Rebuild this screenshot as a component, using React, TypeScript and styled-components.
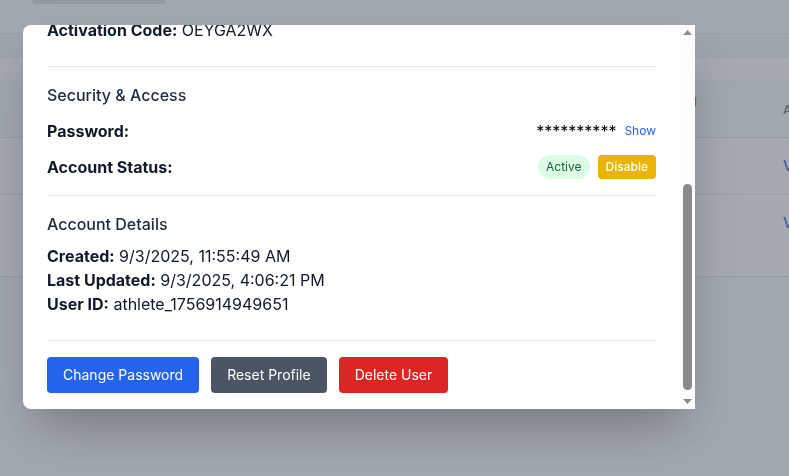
import React, { useLayoutEffect, useRef } from "react";
import styled, { createGlobalStyle } from "styled-components";

const GlobalStyle = createGlobalStyle`
  html, body { margin: 0; padding: 0; }
  body {
    background: #f9fafb;
    font-family: Inter, "Noto Sans", sans-serif;
    color: #111827;
    overflow: hidden;
  }
  * { box-sizing: border-box; }
`;

/* ---------- background page ---------- */
const Page = styled.div`
  width: 789px;
  height: 476px;
  background: #f9fafb;
  overflow: hidden;
`;
const TopBar = styled.div`
  height: 34px;
  padding-left: 32px;
  border-bottom: 1px solid #e5e7eb;
`;
const SearchStub = styled.div`
  width: 134px;
  height: 4px;
  background: #d9dce1;
  border-radius: 0 0 6px 6px;
`;
const Band = styled.div<{ $bg: string; $h: number }>`
  height: ${(p) => p.$h}px;
  background: ${(p) => p.$bg};
  border-bottom: 1px solid #eceef1;
`;
const TableGrid = styled.div`
  display: grid;
  grid-template-columns: 595px 164px 200px;
  width: 959px;
  background: #fff;
  border-bottom: 1px solid #e5e7eb;
`;
const HeadCell = styled.div`
  height: 56px;
  padding: 0 24px;
  background: #f9fafb;
  border-bottom: 1px solid #e5e7eb;
  display: flex;
  align-items: center;
  font-size: 12px;
  line-height: 16px;
  font-weight: 500;
  letter-spacing: 0.05em;
  text-transform: uppercase;
  color: #6b7280;
`;
const HeadText = styled.span<{ $w?: number }>`
  display: block;
  max-width: ${(p) => (p.$w ? `${p.$w}px` : "none")};
`;
const BodyCell = styled.div<{ $h: number; $last?: boolean }>`
  height: ${(p) => p.$h}px;
  padding: 16px 24px 0;
  font-size: 14px;
  line-height: 24px;
  color: #111827;
  border-bottom: ${(p) => (p.$last ? "none" : "1px solid #e5e7eb")};
`;
const RowLink = styled.span`
  color: #2563eb;
  font-weight: 500;
`;

/* ---------- overlay & modal ---------- */
const Overlay = styled.div`
  position: fixed;
  inset: 0;
  background: rgba(75, 85, 99, 0.5);
  padding: 25px 0 0 23px;
  display: flex;
  align-items: flex-start;
`;
const Modal = styled.div`
  width: 672px;
  height: 384px;
  background: #fff;
  border-radius: 8px 0 0 8px;
  box-shadow: 0 25px 50px -12px rgba(0, 0, 0, 0.3);
  display: flex;
  overflow: hidden;
`;
const Scroller = styled.div`
  flex: 1;
  height: 100%;
  overflow-y: auto;
  scrollbar-width: none;
  &::-webkit-scrollbar { display: none; }
`;
const Content = styled.div`
  padding: 0 24px 16px;
`;
const ScrollRail = styled.div`
  width: 15px;
  height: 100%;
  background: #fdfdfd;
  display: flex;
  flex-direction: column;
  align-items: center;
`;
const ArrowBtn = styled.div`
  height: 15px;
  width: 15px;
  display: flex;
  align-items: center;
  justify-content: center;
`;
const Track = styled.div`
  flex: 1;
  width: 100%;
  display: flex;
  flex-direction: column;
  justify-content: flex-end;
  align-items: center;
  padding-bottom: 4px;
`;
const Thumb = styled.div`
  width: 9px;
  height: 206px;
  border-radius: 5px;
  background: #8a8a8a;
`;

const Header = styled.div`
  display: flex;
  align-items: center;
  justify-content: space-between;
  padding: 20px 0 16px;
  border-bottom: 1px solid #e5e7eb;
`;
const Title = styled.h2`
  margin: 0;
  font-size: 20px;
  line-height: 28px;
  font-weight: 600;
  color: #111827;
`;
const CloseBtn = styled.button`
  border: none;
  background: none;
  font-size: 22px;
  color: #9ca3af;
  padding: 0;
`;
const Section = styled.section<{ $pb: number; $border?: boolean }>`
  padding: 16px 0 ${(p) => p.$pb}px;
  border-top: ${(p) => (p.$border ? "1px solid #e5e7eb" : "none")};
`;
const SectionTitle = styled.h3<{ $mb: number }>`
  margin: 0 0 ${(p) => p.$mb}px;
  font-size: 16px;
  line-height: 24px;
  font-weight: 500;
  color: #1f2937;
`;
const Lines = styled.div<{ $gap: number }>`
  display: flex;
  flex-direction: column;
  gap: ${(p) => p.$gap}px;
`;
const Line = styled.div`
  font-size: 16px;
  line-height: 24px;
  color: #111827;
`;
const Label = styled.span`
  font-weight: 700;
`;
const SplitRow = styled.div`
  display: flex;
  align-items: center;
  justify-content: space-between;
  min-height: 24px;
  font-size: 16px;
  line-height: 24px;
`;
const RightGroup = styled.div`
  display: flex;
  align-items: center;
  gap: 8px;
`;
const Stars = styled.span`
  font-size: 16px;
  font-weight: 400;
  color: #000;
`;
const TextLink = styled.button`
  border: none;
  background: none;
  padding: 0;
  font-family: inherit;
  font-size: 12px;
  line-height: 16px;
  color: #2563eb;
  cursor: pointer;
`;
const Badge = styled.span`
  display: inline-flex;
  align-items: center;
  height: 24px;
  padding: 0 8px;
  border-radius: 9999px;
  background: #dcfce7;
  color: #166534;
  font-size: 12px;
  line-height: 16px;
`;
const SmallButton = styled.button`
  height: 24px;
  padding: 0 8px;
  border: none;
  border-radius: 4px;
  background: #eab308;
  color: #fff;
  font-family: inherit;
  font-size: 12px;
  line-height: 16px;
  font-weight: 500;
  cursor: pointer;
`;
const Actions = styled.div`
  display: flex;
  gap: 12px;
  padding-top: 16px;
  border-top: 1px solid #e5e7eb;
`;
const ActionButton = styled.button<{ $bg: string }>`
  height: 36px;
  padding: 0 16px;
  border: none;
  border-radius: 4px;
  background: ${(p) => p.$bg};
  color: #fff;
  font-family: inherit;
  font-size: 14px;
  line-height: 20px;
  font-weight: 400;
  cursor: pointer;
`;

const UpArrow = () => (
  <svg width="9" height="5" viewBox="0 0 9 5"><path d="M0 5 L4.5 0 L9 5 Z" fill="#8a8a8a" /></svg>
);
const DownArrow = () => (
  <svg width="9" height="5" viewBox="0 0 9 5"><path d="M0 0 L4.5 5 L9 0 Z" fill="#8a8a8a" /></svg>
);

export default function App() {
  const scrollRef = useRef<HTMLDivElement>(null);
  useLayoutEffect(() => {
    if (scrollRef.current) scrollRef.current.scrollTop = scrollRef.current.scrollHeight;
  }, []);

  return (
    <>
      <GlobalStyle />
      <Page>
        <TopBar>
          <SearchStub />
        </TopBar>
        <Band $bg="#f3f4f6" $h={24} />
        <Band $bg="#ffffff" $h={24} />
        <TableGrid>
          <HeadCell>Athlete</HeadCell>
          <HeadCell><HeadText $w={80}>Activation Code</HeadText></HeadCell>
          <HeadCell>Actions</HeadCell>
          <BodyCell $h={57}>Jordan Smith</BodyCell>
          <BodyCell $h={57}></BodyCell>
          <BodyCell $h={57}><RowLink>View</RowLink></BodyCell>
          <BodyCell $h={81} $last>Taylor Reed</BodyCell>
          <BodyCell $h={81} $last></BodyCell>
          <BodyCell $h={81} $last><RowLink>View</RowLink></BodyCell>
        </TableGrid>
      </Page>

      <Overlay>
        <Modal>
          <Scroller ref={scrollRef}>
            <Content>
              <Header>
                <Title>User Details</Title>
                <CloseBtn aria-label="Close">×</CloseBtn>
              </Header>
              <Section $pb={24}>
                <SectionTitle $mb={8}>Basic Information</SectionTitle>
                <Lines $gap={0}>
                  <Line><Label>Name:</Label> Jordan Smith</Line>
                  <Line><Label>Email:</Label> jordan.smith@example.com</Line>
                  <Line><Label>Role:</Label> athlete</Line>
                  <Line><Label>Sport:</Label> Track &amp; Field</Line>
                  <Line><Label>Team:</Label> Varsity</Line>
                  <Line><Label>Activation Code:</Label> OEYGA2WX</Line>
                </Lines>
              </Section>

              <Section $pb={16} $border>
                <SectionTitle $mb={12}>Security &amp; Access</SectionTitle>
                <Lines $gap={12}>
                  <SplitRow>
                    <Label>Password:</Label>
                    <RightGroup>
                      <Stars>**********</Stars>
                      <TextLink>Show</TextLink>
                    </RightGroup>
                  </SplitRow>
                  <SplitRow>
                    <Label>Account Status:</Label>
                    <RightGroup>
                      <Badge>Active</Badge>
                      <SmallButton>Disable</SmallButton>
                    </RightGroup>
                  </SplitRow>
                </Lines>
              </Section>

              <Section $pb={24} $border>
                <SectionTitle $mb={8}>Account Details</SectionTitle>
                <Lines $gap={0}>
                  <Line><Label>Created:</Label> 9/3/2025, 11:55:49 AM</Line>
                  <Line><Label>Last Updated:</Label> 9/3/2025, 4:06:21 PM</Line>
                  <Line><Label>User ID:</Label> athlete_1756914949651</Line>
                </Lines>
              </Section>

              <Actions>
                <ActionButton $bg="#2563eb">Change Password</ActionButton>
                <ActionButton $bg="#4b5563">Reset Profile</ActionButton>
                <ActionButton $bg="#dc2626">Delete User</ActionButton>
              </Actions>
            </Content>
          </Scroller>
          <ScrollRail>
            <ArrowBtn><UpArrow /></ArrowBtn>
            <Track><Thumb /></Track>
            <ArrowBtn><DownArrow /></ArrowBtn>
          </ScrollRail>
        </Modal>
      </Overlay>
    </>
  );
}
